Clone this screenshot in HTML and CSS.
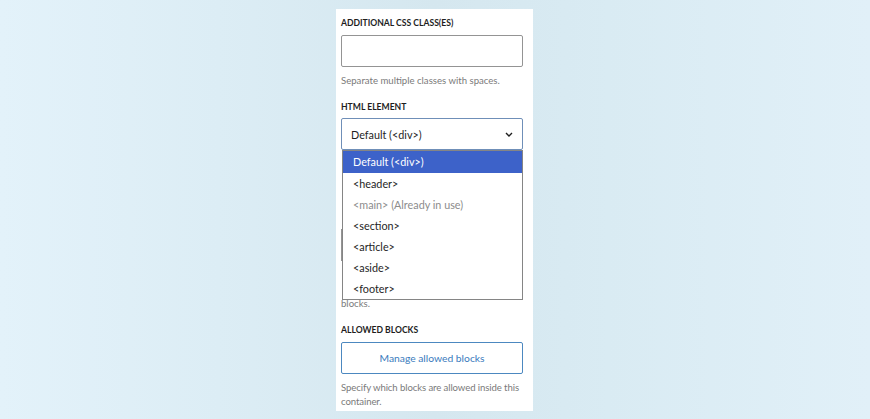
FILE: index.html
```html
<!DOCTYPE html>
<html lang="en">
<head>
<meta charset="utf-8">
<title>Block settings</title>
<link rel="stylesheet" href="styles.css">
</head>
<body>
<div class="stage">
  <div class="panel">
    <div class="label first">Additional CSS class(es)</div>
    <div class="input"></div>
    <p class="help">Separate multiple classes with spaces.</p>

    <div class="label">HTML element</div>
    <div class="select-wrap">
      <div class="select">
        <span>Default (&lt;div&gt;)</span>
        <svg class="chev" width="8" height="5" viewBox="0 0 8 5"><path d="M1 1l3 3 3-3" fill="none" stroke="#1e1e1e" stroke-width="1.4"/></svg>
      </div>
      <ul class="menu">
        <li class="opt sel">Default (&lt;div&gt;)</li>
        <li class="opt">&lt;header&gt;</li>
        <li class="opt dis">&lt;main&gt; (Already in use)</li>
        <li class="opt">&lt;section&gt;</li>
        <li class="opt">&lt;article&gt;</li>
        <li class="opt">&lt;aside&gt;</li>
        <li class="opt">&lt;footer&gt;</li>
      </ul>
    </div>
    <div class="covered">
      <div class="box"></div>
    </div>
    <p class="help tail">blocks.</p>

    <div class="label">Allowed blocks</div>
    <button class="btn">Manage allowed blocks</button>
    <p class="help tight">Specify which blocks are allowed inside this container.</p>
  </div>
</div>
</body>
</html>
```
FILE: styles.css
```css
html, body {
  margin: 0;
  height: 100%;
}
body {
  background: linear-gradient(90deg, #e3f2fa 0%, #dcedf5 25%, #d5e7ef 50%, #d9ebf3 70%, #e1f0f8 100%);
  font-family: Lato, "Noto Sans", sans-serif;
  color: #1e1e1e;
  overflow: hidden;
}
.stage {
  padding: 9px 0 0 336px;
}
.panel {
  width: 182px;
  height: 395px;
  background: #ffffff;
  padding: 7px 10px 0 5px;
  overflow: hidden;
}
.label {
  font-size: 8.6px;
  line-height: 14px;
  font-weight: 700;
  text-transform: uppercase;
  margin-top: 12px;
  color: #1e1e1e;
}
.label.first {
  margin-top: 0;
}
.input {
  margin-top: 5px;
  height: 30px;
  border: 1px solid #949494;
  border-radius: 2px;
}
.help {
  margin: 7px 0 0;
  font-size: 9.6px;
  line-height: 14px;
  color: #7a7a7a;
}
.help.tail {
  margin-top: 0;
}
.help.tight {
  letter-spacing: -0.1px;
  margin-right: -4px;
}
.select-wrap {
  position: relative;
  margin-top: 4px;
}
.select {
  height: 30px;
  border: 1px solid #6f8fb8;
  border-radius: 2px;
  display: flex;
  align-items: center;
  justify-content: space-between;
  padding: 0 9px 0 9px;
  font-size: 10.8px;
}
.chev {
  display: block;
}
.menu {
  position: absolute;
  left: 1px;
  right: 0;
  top: 32px;
  margin: 0;
  padding: 0;
  list-style: none;
  background: #ffffff;
  border: 1px solid #858585;
  z-index: 2;
}
.opt {
  height: 21px;
  line-height: 21px;
  padding-left: 10px;
  font-size: 10.8px;
  color: #1e1e1e;
}
.opt.sel {
  background: #3d62c9;
  color: #ffffff;
  height: 22px;
  line-height: 22px;
}
.opt.dis {
  color: #8c8c8c;
}
.covered {
  height: 147px;
  padding-top: 79px;
  box-sizing: border-box;
}
.box {
  height: 30px;
  border: 1px solid #949494;
}
.btn {
  display: block;
  margin-top: 5px;
  width: 182px;
  height: 32px;
  background: #ffffff;
  border: 1px solid #4c88c0;
  border-radius: 2px;
  color: #3a7bbd;
  font-family: Lato, "Noto Sans", sans-serif;
  font-size: 10.3px;
  padding: 0;
}
```
